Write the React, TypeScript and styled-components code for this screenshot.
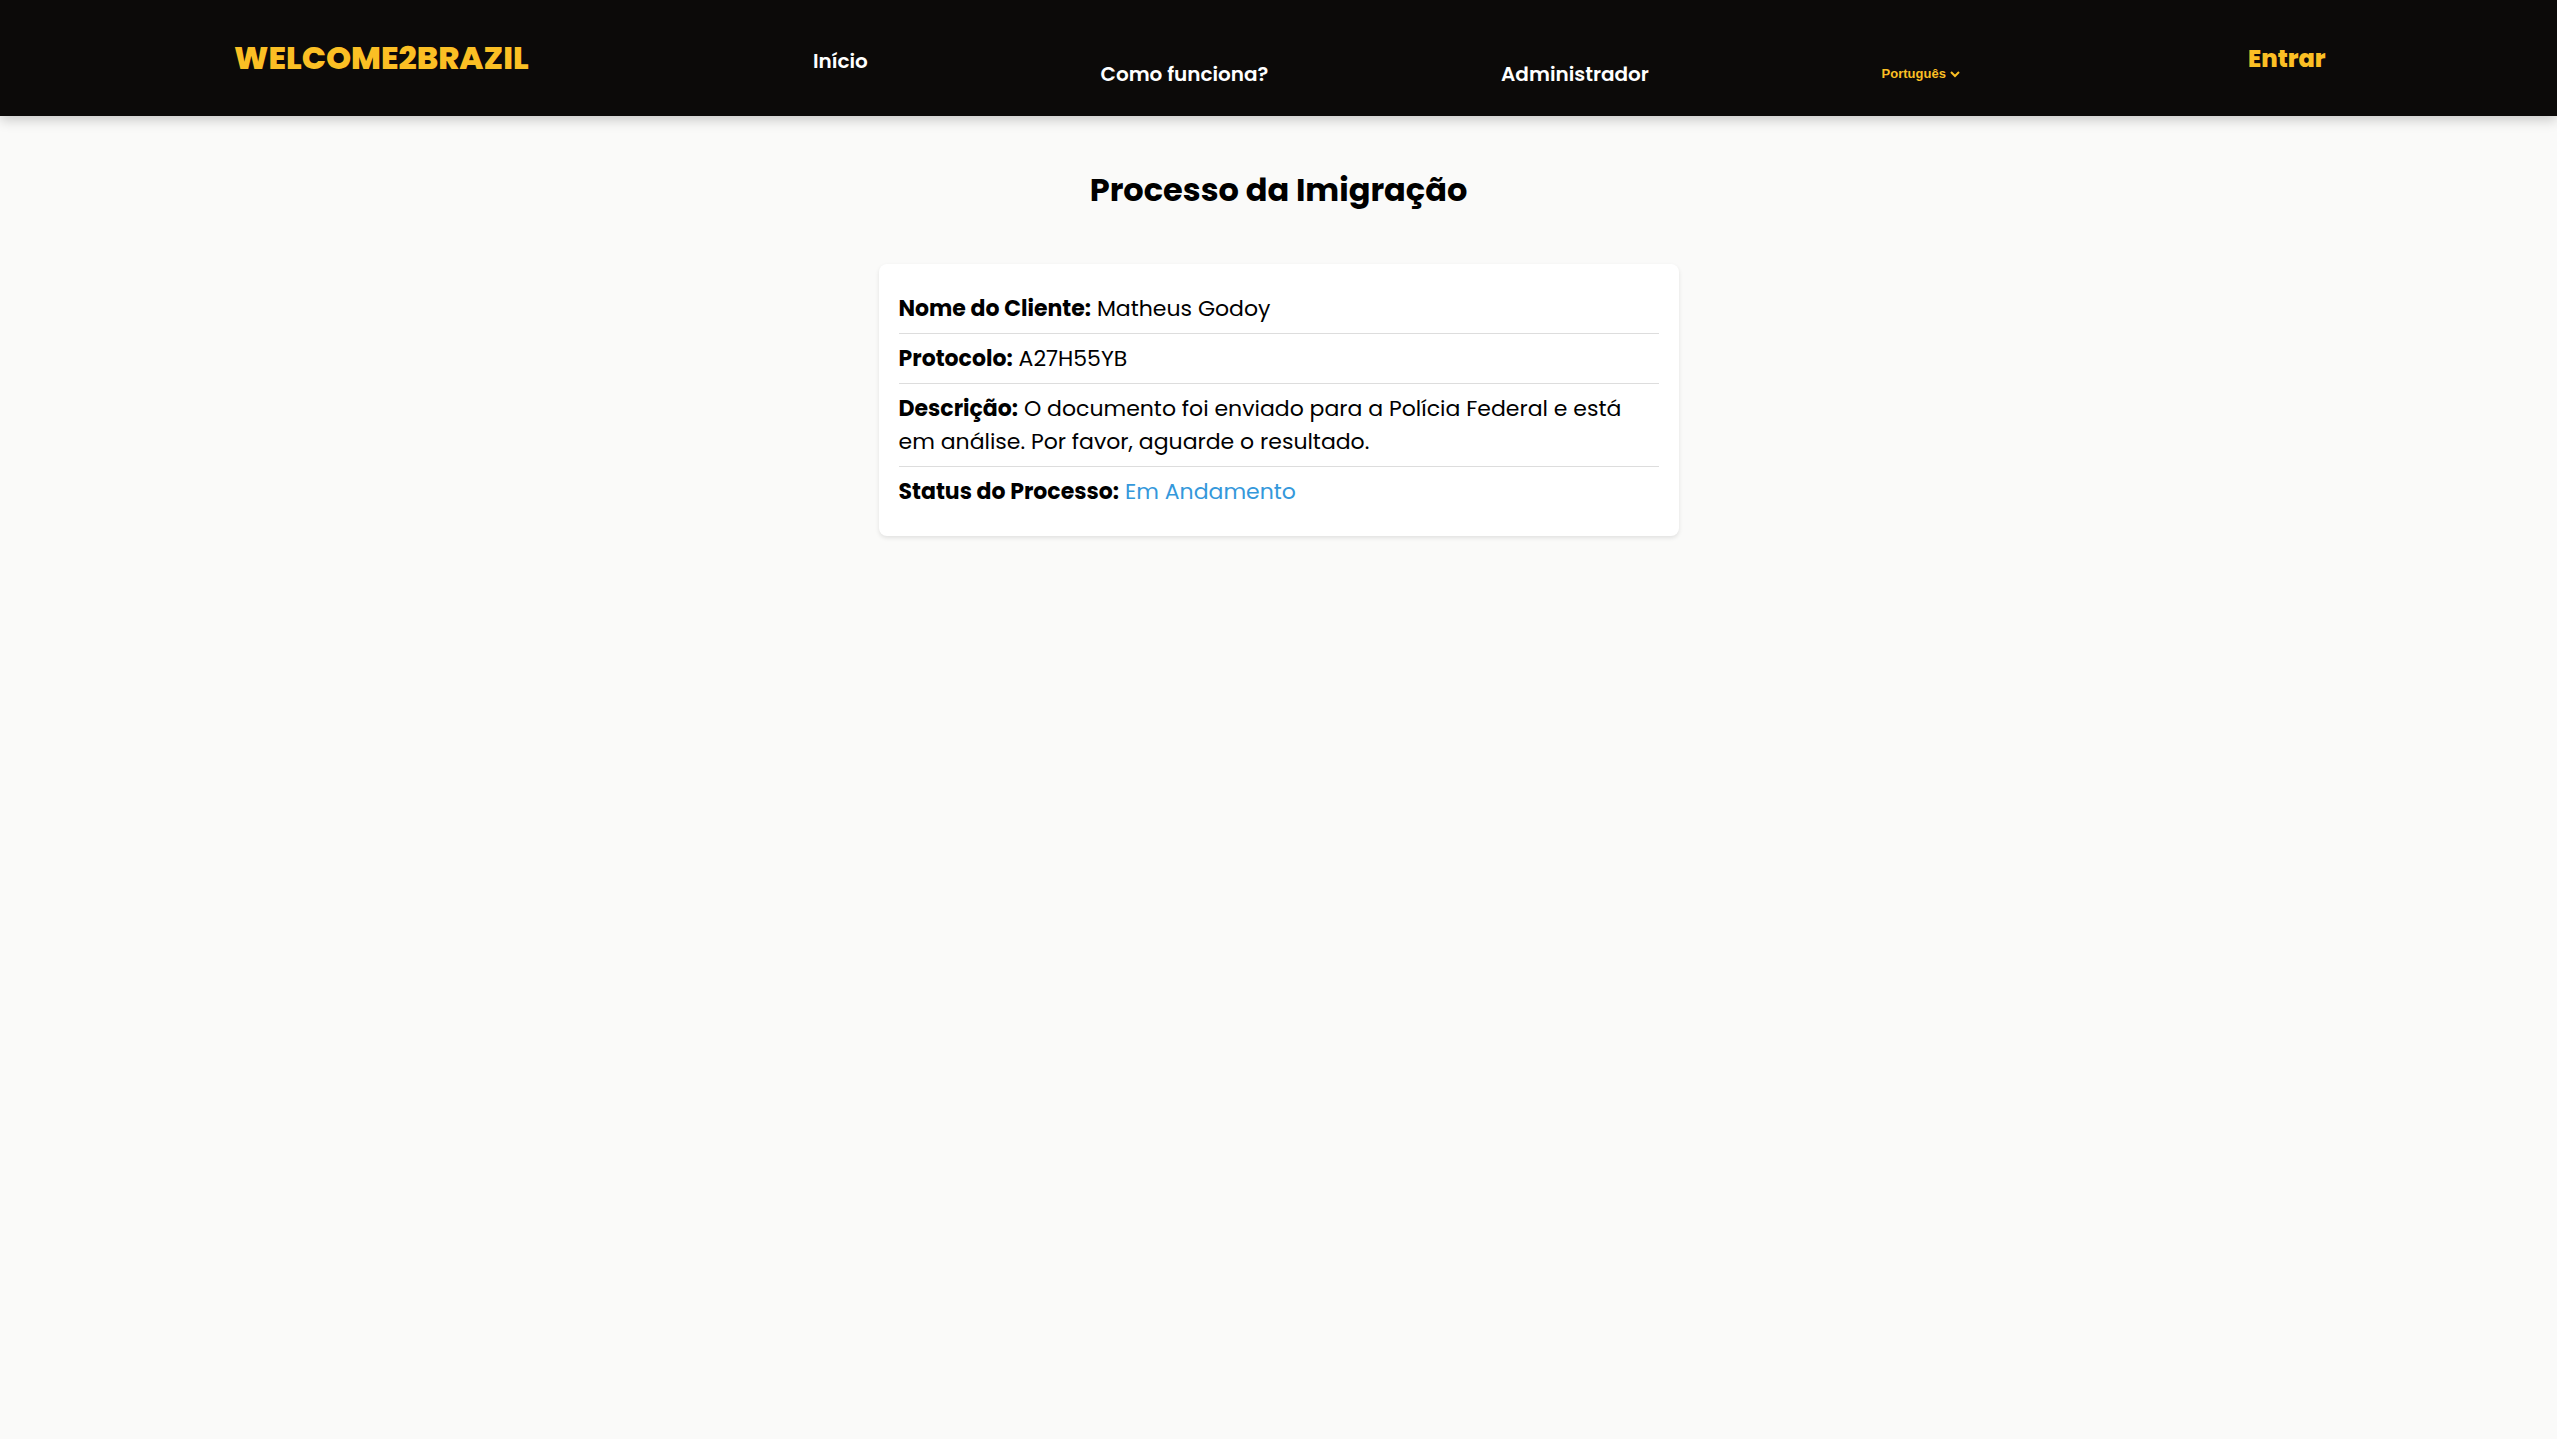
import React, { useState } from "react";
import styled, { createGlobalStyle } from "styled-components";

const GlobalStyle = createGlobalStyle`
  * {
    box-sizing: border-box;
  }

  body {
    margin: 0;
    background: #fafaf9;
    color: #000000;
    font-family: Poppins, Inter, "Liberation Sans", sans-serif;
    font-size: 22px;
    line-height: 33px;
  }
`;

const Header = styled.header`
  display: flex;
  align-items: center;
  justify-content: space-between;
  height: 116px;
  padding: 0 9.05vw 0 9.15vw;
  background: #0c0a09;
  box-shadow: 0 4px 12px rgba(0, 0, 0, 0.2);
`;

const Logo = styled.a`
  color: #fbbf24;
  font-size: 32px;
  font-weight: 800;
  line-height: 48px;
  text-decoration: none;
`;

const Navigation = styled.nav`
  padding-top: 19px;
`;

const Menu = styled.ul`
  display: flex;
  align-items: flex-end;
  gap: 9.1vw;
  height: 43px;
  margin: 0;
  padding: 0;
  list-style: none;
`;

const MenuItem = styled.li<{ $raised?: boolean }>`
  display: flex;
  align-items: center;
  align-self: ${({ $raised }) => ($raised ? "flex-start" : "flex-end")};
  height: 30px;
`;

const MenuLink = styled.a`
  color: #ffffff;
  font-size: 20px;
  font-weight: 600;
  line-height: 30px;
  text-decoration: none;
`;

const LanguagePicker = styled.label`
  display: flex;
  align-items: center;
  gap: 4px;
  padding-right: 4px;
  color: #fbbf24;
`;

const LanguageSelect = styled.select`
  appearance: none;
  field-sizing: content;
  padding: 0;
  border: 0;
  background: transparent;
  color: inherit;
  font-family: "Liberation Sans", Arial, sans-serif;
  font-size: 13px;
  font-weight: 700;
  line-height: 20px;
`;

const Chevron = styled.svg`
  width: 10px;
  height: 7px;
  pointer-events: none;
`;

const LoginButton = styled.button`
  padding: 2px 0 0;
  border: 0;
  background: transparent;
  color: #fbbf24;
  font: inherit;
  font-size: 24px;
  font-weight: 800;
  line-height: 36px;
  cursor: pointer;
`;

const Main = styled.main`
  display: flex;
  flex-direction: column;
  align-items: center;
  gap: 50px;
  padding: 50px 20px;
`;

const Title = styled.h1`
  margin: 0;
  font-size: 32px;
  font-weight: 700;
  line-height: 48px;
`;

const Card = styled.section`
  width: 100%;
  max-width: 800px;
  padding: 20px;
  border-radius: 8px;
  background: #ffffff;
  box-shadow: 0 2px 4px rgba(0, 0, 0, 0.1);
`;

const Field = styled.p`
  margin: 0;
  padding: 8px 0;

  &:not(:last-child) {
    border-bottom: 1px solid #dddddd;
  }
`;

const Label = styled.strong`
  font-weight: 700;
`;

const Status = styled.span`
  color: #3498db;
`;

export default function App() {
  const [language, setLanguage] = useState("pt");

  return (
    <>
      <GlobalStyle />
      <Header>
        <Logo href="#">WELCOME2BRAZIL</Logo>
        <Navigation>
          <Menu>
            <MenuItem $raised>
              <MenuLink href="#">Início</MenuLink>
            </MenuItem>
            <MenuItem>
              <MenuLink href="#">Como funciona?</MenuLink>
            </MenuItem>
            <MenuItem>
              <MenuLink href="#">Administrador</MenuLink>
            </MenuItem>
            <MenuItem>
              <LanguagePicker>
                <LanguageSelect
                  aria-label="Idioma"
                  value={language}
                  onChange={(event) => setLanguage(event.target.value)}
                >
                  <option value="pt">Português</option>
                </LanguageSelect>
                <Chevron viewBox="0 0 10 7" fill="none" stroke="currentColor" strokeWidth="2">
                  <path d="M1 1l4 4 4-4" />
                </Chevron>
              </LanguagePicker>
            </MenuItem>
          </Menu>
        </Navigation>
        <LoginButton type="button">Entrar</LoginButton>
      </Header>
      <Main>
        <Title>Processo da Imigração</Title>
        <Card>
          <Field>
            <Label>Nome do Cliente:</Label> Matheus Godoy
          </Field>
          <Field>
            <Label>Protocolo:</Label> A27H55YB
          </Field>
          <Field>
            <Label>Descrição:</Label> O documento foi enviado para a Polícia Federal e está em
            análise. Por favor, aguarde o resultado.
          </Field>
          <Field>
            <Label>Status do Processo:</Label> <Status>Em Andamento</Status>
          </Field>
        </Card>
      </Main>
    </>
  );
}
